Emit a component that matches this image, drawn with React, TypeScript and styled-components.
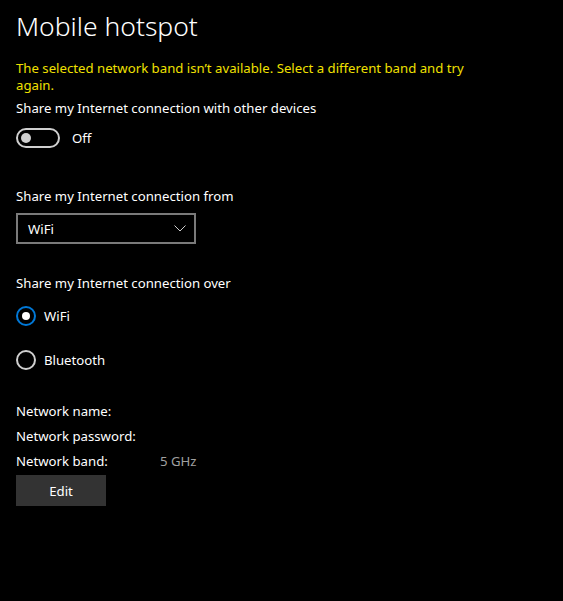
import React, { useState } from 'react';
import styled, { createGlobalStyle } from 'styled-components';

const GlobalStyle = createGlobalStyle`
  html, body {
    margin: 0;
    padding: 0;
    background: #000;
  }
  body {
    font-family: "Noto Sans", "Open Sans", sans-serif;
    color: #fff;
  }
`;

const Page = styled.div`
  width: 563px;
  height: 601px;
  background: #000;
  padding: 8px 16px 0 16px;
  box-sizing: border-box;
  display: flex;
  flex-direction: column;
`;

const Title = styled.h1`
  margin: 0;
  font-size: 26.5px;
  font-weight: 300;
  line-height: 36px;
  color: #fff;
`;

const Warning = styled.p`
  margin: 16px 0 0 0;
  max-width: 470px;
  font-size: 13.2px;
  line-height: 17px;
  color: #f0e000;
`;

const Label = styled.div<{ $top?: number }>`
  margin-top: ${p => p.$top ?? 0}px;
  font-size: 13.2px;
  line-height: 20px;
  color: #fff;
`;

const ToggleRow = styled.div`
  display: flex;
  align-items: center;
  gap: 12px;
  margin-top: 10px;
`;

const Track = styled.button<{ $on: boolean }>`
  width: 44px;
  height: 20px;
  box-sizing: border-box;
  border-radius: 10px;
  border: 2px solid #cfcfcf;
  background: ${p => (p.$on ? '#0078d7' : 'transparent')};
  padding: 0 3px;
  display: flex;
  align-items: center;
  justify-content: ${p => (p.$on ? 'flex-end' : 'flex-start')};
  cursor: pointer;
`;

const Thumb = styled.span`
  width: 10px;
  height: 10px;
  border-radius: 50%;
  background: #cfcfcf;
`;

const ToggleText = styled.span`
  font-size: 13.2px;
  color: #fff;
`;

const Select = styled.div`
  margin-top: 7px;
  width: 180px;
  height: 31px;
  box-sizing: border-box;
  border: 2px solid #7a7a7a;
  display: flex;
  align-items: center;
  justify-content: space-between;
  padding: 0 8px 0 10px;
  font-size: 13.2px;
  color: #fff;
`;

const RadioGroup = styled.div`
  display: flex;
  flex-direction: column;
  gap: 24px;
  margin-top: 13px;
`;

const RadioRow = styled.label`
  display: flex;
  align-items: center;
  gap: 8px;
  font-size: 13.2px;
  color: #fff;
  cursor: pointer;
`;

const RadioCircle = styled.span<{ $checked: boolean }>`
  width: 20px;
  height: 20px;
  box-sizing: border-box;
  border-radius: 50%;
  border: 2px solid ${p => (p.$checked ? '#0078d7' : '#cfcfcf')};
  display: flex;
  align-items: center;
  justify-content: center;
  &::after {
    content: '';
    width: 8px;
    height: 8px;
    border-radius: 50%;
    background: #fff;
    display: ${p => (p.$checked ? 'block' : 'none')};
  }
`;

const InfoList = styled.div`
  margin-top: 31px;
  display: flex;
  flex-direction: column;
  gap: 5px;
`;

const InfoRow = styled.div`
  display: grid;
  grid-template-columns: 144px auto;
  font-size: 13.2px;
  line-height: 20px;
`;

const InfoValue = styled.span`
  color: #a0a0a0;
`;

const EditButton = styled.button`
  margin-top: 4px;
  width: 90px;
  height: 31px;
  border: none;
  background: #333;
  color: #fff;
  font-family: inherit;
  font-size: 13.2px;
  cursor: pointer;
`;

export default function App() {
  const [on, setOn] = useState(false);
  const [over, setOver] = useState<'wifi' | 'bt'>('wifi');

  return (
    <>
      <GlobalStyle />
      <Page>
        <Title>Mobile hotspot</Title>
        <Warning>
          The selected network band isn’t available. Select a different band and try again.
        </Warning>
        <Label $top={4}>Share my Internet connection with other devices</Label>
        <ToggleRow>
          <Track $on={on} onClick={() => setOn(!on)}>
            <Thumb />
          </Track>
          <ToggleText>{on ? 'On' : 'Off'}</ToggleText>
        </ToggleRow>

        <Label $top={38}>Share my Internet connection from</Label>
        <Select>
          <span>WiFi</span>
          <svg width="12" height="7" viewBox="0 0 12 7" fill="none">
            <path d="M0.5 0.5 L6 6 L11.5 0.5" stroke="#cfcfcf" strokeWidth="1" />
          </svg>
        </Select>

        <Label $top={29}>Share my Internet connection over</Label>
        <RadioGroup>
          <RadioRow onClick={() => setOver('wifi')}>
            <RadioCircle $checked={over === 'wifi'} />
            WiFi
          </RadioRow>
          <RadioRow onClick={() => setOver('bt')}>
            <RadioCircle $checked={over === 'bt'} />
            Bluetooth
          </RadioRow>
        </RadioGroup>

        <InfoList>
          <InfoRow>
            <span>Network name:</span>
          </InfoRow>
          <InfoRow>
            <span>Network password:</span>
          </InfoRow>
          <InfoRow>
            <span>Network band:</span>
            <InfoValue>5 GHz</InfoValue>
          </InfoRow>
        </InfoList>
        <EditButton>Edit</EditButton>
      </Page>
    </>
  );
}
